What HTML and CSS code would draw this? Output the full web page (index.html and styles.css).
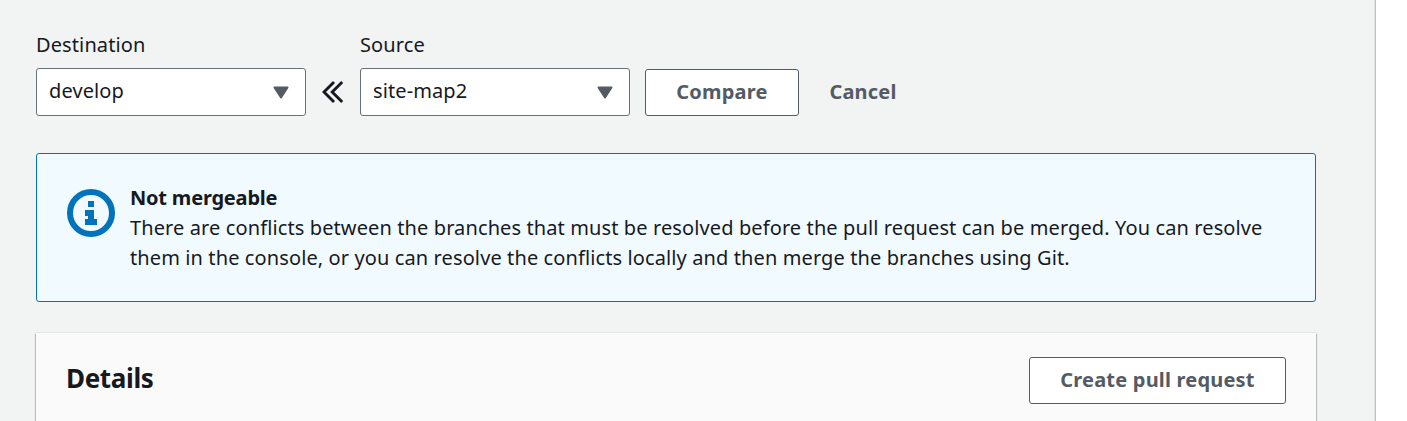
FILE: index.html
```
<!DOCTYPE html>
<html lang="en">
<head>
<meta charset="utf-8">
<title>Create pull request</title>
<link rel="stylesheet" href="styles.css">
</head>
<body>
<main class="page">
  <form class="compare">
    <div class="field">
      <span class="label">Destination</span>
      <div class="select"><span>develop</span><svg width="16" height="13" viewBox="0 0 16 13"><path d="M1.500 1.500h13L8 11.500z" fill="#545b64" stroke="#545b64" stroke-width="2" stroke-linejoin="round"/></svg></div>
    </div>
    <svg class="chevrons" width="22" height="24" viewBox="0 0 22 24" fill="none" stroke="#16191f" stroke-width="2.900"><path d="M12 2 2 12l10 10M20.200 2l-10 10 10 10"/></svg>
    <div class="field">
      <span class="label">Source</span>
      <div class="select"><span>site-map2</span><svg width="16" height="13" viewBox="0 0 16 13"><path d="M1.500 1.500h13L8 11.500z" fill="#545b64" stroke="#545b64" stroke-width="2" stroke-linejoin="round"/></svg></div>
    </div>
    <button type="button" class="button compare-button">Compare</button>
    <button type="button" class="button link">Cancel</button>
  </form>
  <section class="alert">
    <svg class="info" width="48" height="48" viewBox="0 0 48 48"><circle cx="24" cy="24" r="21" fill="none" stroke="#0073bb" stroke-width="6"/><path fill="#0073bb" d="M21 12h6v6h-6zM18 21h9v9h3v6H18v-6h3v-3h-3z"/></svg>
    <div class="message">
      <strong class="message-title">Not mergeable</strong>
      <span>There are conflicts between the branches that must be resolved before the pull request can be merged. You can resolve</span>
      <span>them in the console, or you can resolve the conflicts locally and then merge the branches using Git.</span>
    </div>
  </section>
  <section class="details">
    <h2 class="details-title">Details</h2>
    <button type="button" class="button create">Create pull request</button>
  </section>
</main>
</body>
</html>
```

FILE: styles.css
```
* { box-sizing: border-box; }
body { margin: 0; height: 421px; overflow: hidden; background: #fff; color: #16191f; font: 20px/30px "Noto Sans", sans-serif; letter-spacing: .11px; }
.page { width: 1376px; height: 421px; padding: 30px 59px 0 36px; background: #f2f3f3; border-right: 1px solid #bcc3c5; box-shadow: inset -1px 0 #dde0e1; overflow: hidden; }
.compare { display: flex; align-items: flex-end; height: 86px; }
.field { width: 270px; }
.label { display: block; height: 38px; }
.select { display: flex; align-items: center; justify-content: space-between; height: 48px; padding: 0 16px 2px 12px; background: #fff; border: 1px solid #687078; border-radius: 3px; }
.select svg { margin-top: 2px; }
.chevrons { margin: 0 16px 12px; }
.button { height: 47px; padding: 0 0 2px; border: 1px solid #545b64; border-radius: 3px; background: #fff; color: #545b64; font: 700 20px/30px "Noto Sans", sans-serif; letter-spacing: .2px; }
.compare-button { width: 154px; margin-left: 15px; }
.link { width: 128px; background: none; border-color: transparent; }
.alert { display: flex; width: 1280px; height: 149px; margin-top: 37px; padding: 29px; border: 1px solid #0073bb; border-radius: 3px; background: #f1faff; }
.info { margin: 6px 15px 0 1px; }
.message { display: flex; flex-direction: column; align-items: flex-start; white-space: nowrap; }
.message-title { font-weight: 700; letter-spacing: -.2px; }
.details { display: flex; justify-content: space-between; width: 1280px; height: 120px; margin-top: 31px; padding: 24px 30px; background: #fafafa; box-shadow: 0 0 1px rgba(0, 28, 36, .3), 1px 1px 1px rgba(0, 28, 36, .2), -1px 1px 1px rgba(0, 28, 36, .2); }
.details-title { margin: 4px 0; font-size: 26px; font-weight: 700; line-height: 34px; letter-spacing: -.35px; }
.create { width: 257px; }
```
